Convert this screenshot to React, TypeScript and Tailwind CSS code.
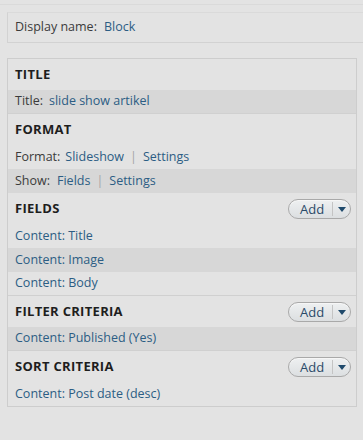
import React from "react";

const font = { fontFamily: '"Open Sans", "Noto Sans", sans-serif' };

function AddButton() {
  return (
    <div className="flex items-center h-[20px] w-[63px] rounded-full border border-[#a9a9a9] bg-gradient-to-b from-[#eef0f1] to-[#dcdfe1] shadow-[inset_0_1px_0_#f6f6f6]">
      <span className="flex-1 pl-[11px] text-[13px] leading-none text-[#2a4a68]">Add</span>
      <span className="h-[14px] w-px bg-[#c4c4c4]" />
      <span className="w-[17px] flex justify-center items-center">
        <svg width="8" height="5" viewBox="0 0 8 5">
          <path d="M0 0 L8 0 L4 5 Z" fill="#1f4a6c" />
        </svg>
      </span>
    </div>
  );
}

function Heading({ children, add }: { children: React.ReactNode; add?: boolean }) {
  return (
    <div className="flex items-center justify-between h-[31px] pl-[7px] pr-[5px] pt-[1px]">
      <span className="text-[13px] font-bold text-[#1e1e1e] tracking-[0.3px]">{children}</span>
      {add && <AddButton />}
    </div>
  );
}

function Row({ dark, children, border }: { dark?: boolean; children: React.ReactNode; border?: boolean }) {
  return (
    <div
      className={`flex items-center h-[24px] pl-[7px] text-[12.5px] ${dark ? "bg-[#d7d7d7]" : ""} ${
        border ? "border-b border-[#d0d0d0]" : ""
      }`}
    >
      {children}
    </div>
  );
}

const L = ({ children }: { children: React.ReactNode }) => <span className="text-[#2c5d84]">{children}</span>;
const T = ({ children }: { children: React.ReactNode }) => <span className="text-[#3b3b3b]">{children}</span>;
const Sep = () => <span className="text-[#a5a5a5] mx-[6px]">|</span>;

export default function App() {
  return (
    <div className="w-[363px] h-[440px] bg-[#e3e3e3] overflow-hidden" style={font}>
      <div className="h-[4px]" />
      <div className="h-px bg-[#dadada]" />
      <div className="h-[7px]" />
      <div className="ml-[7px] w-[380px] h-[31px] border-l border-t border-b border-[#d2d2d2] border-t-[#dadada] flex items-center pl-[7px] text-[12.5px]">
        <T>Display name:</T>
        <span className="ml-[7px]">
          <L>Block</L>
        </span>
      </div>
      <div className="h-[15px]" />
      <div className="ml-[7px] w-[350px] border border-[#cdcdcd]">
        <Heading>TITLE</Heading>
        <Row dark border>
          <T>Title:</T>
          <span className="ml-[6px]">
            <L>slide show artikel</L>
          </span>
        </Row>
        <Heading>FORMAT</Heading>
        <Row>
          <T>Format:</T>
          <span className="ml-[5px]">
            <L>Slideshow</L>
          </span>
          <Sep />
          <L>Settings</L>
        </Row>
        <Row dark>
          <T>Show:</T>
          <span className="ml-[7px]">
            <L>Fields</L>
          </span>
          <Sep />
          <L>Settings</L>
        </Row>
        <Heading add>FIELDS</Heading>
        <Row>
          <L>Content: Title</L>
        </Row>
        <Row dark>
          <L>Content: Image</L>
        </Row>
        <Row border>
          <L>Content: Body</L>
        </Row>
        <Heading add>FILTER CRITERIA</Heading>
        <Row dark border>
          <L>Content: Published (Yes)</L>
        </Row>
        <Heading add>SORT CRITERIA</Heading>
        <Row>
          <L>Content: Post date (desc)</L>
        </Row>
      </div>
    </div>
  );
}
